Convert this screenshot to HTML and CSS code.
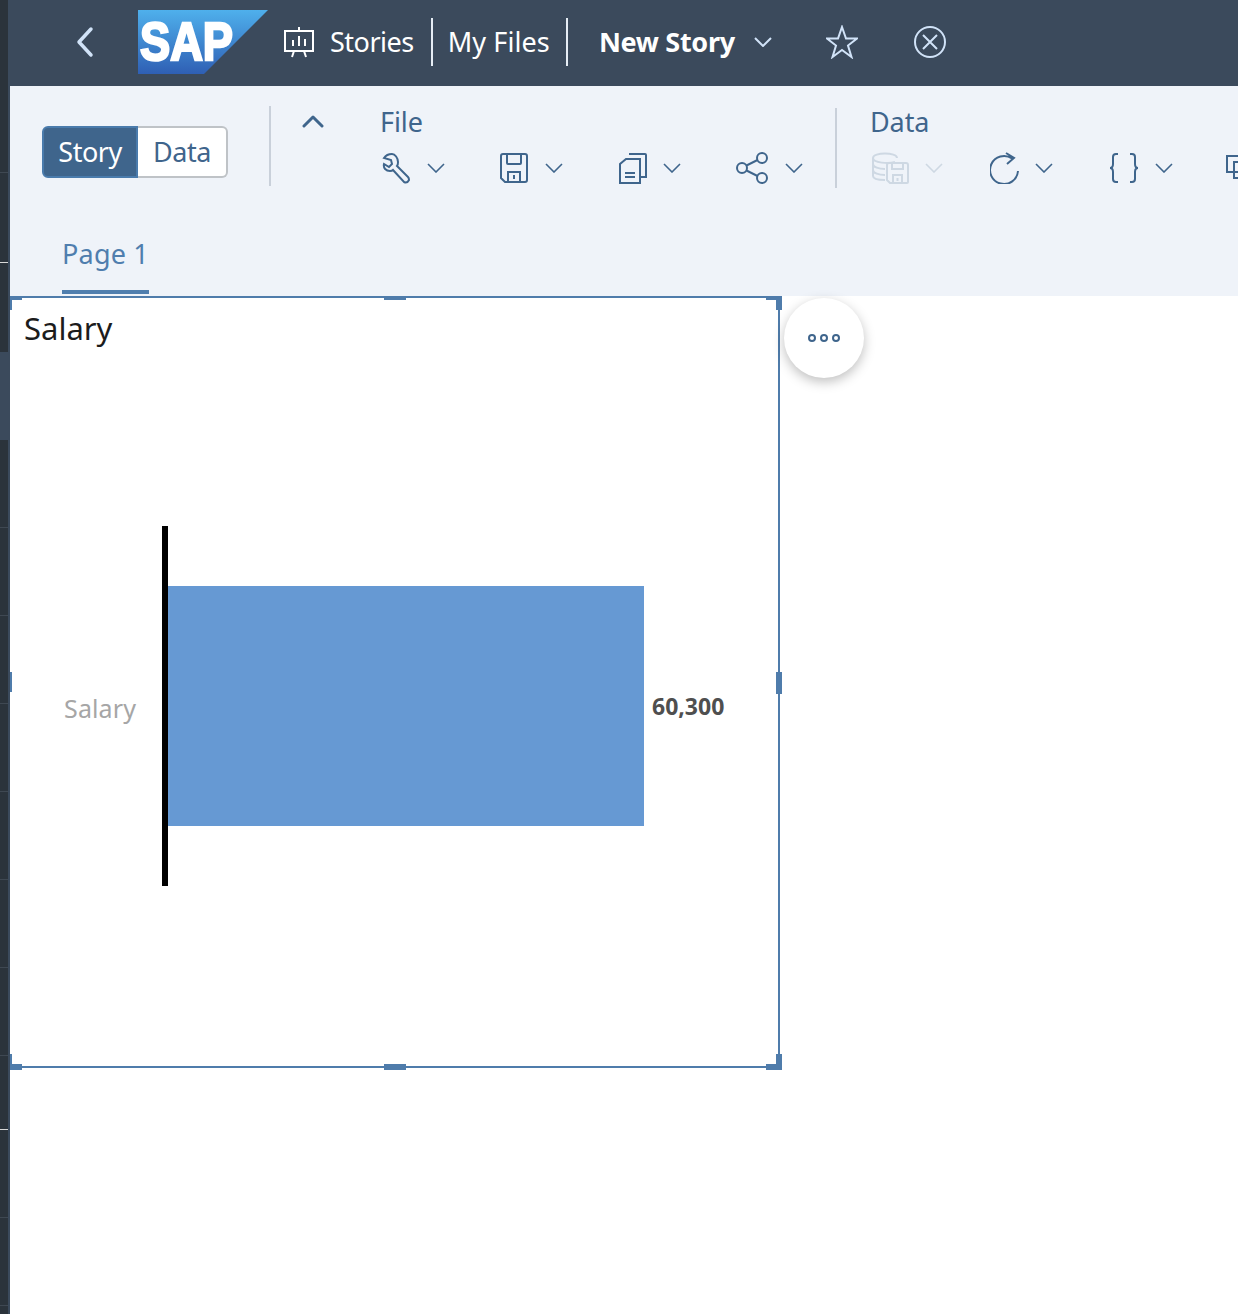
FILE: index.html
```html
<!DOCTYPE html>
<html lang="en">
<head>
  <meta charset="UTF-8" />
  <title>New Story</title>
  <link rel="stylesheet" href="styles.css">
</head>
<body>
  <div class="app">
    <div class="rail">
      <div class="rail-item first"></div>
      <div class="rail-item tall light"></div>
      <div class="rail-item tall plain"></div>
      <div class="rail-item active"></div>
      <div class="rail-item"></div>
      <div class="rail-item"></div>
      <div class="rail-item"></div>
      <div class="rail-item"></div>
      <div class="rail-item"></div>
      <div class="rail-item"></div>
      <div class="rail-item"></div>
      <div class="rail-item short light"></div>
      <div class="rail-item"></div>
      <div class="rail-item"></div>
    </div>

    <div class="main">
      <header class="shell">
        <svg class="back" width="20" height="32" viewBox="0 0 20 32"><path d="M16 3 4 16l12 13" /></svg>
        <svg class="logo" width="130" height="64" viewBox="0 0 130 64">
          <defs>
            <linearGradient id="sapBlue" x1="0" y1="0" x2="0" y2="1">
              <stop offset="0" stop-color="#4fb0ec" />
              <stop offset="1" stop-color="#2f5fb4" />
            </linearGradient>
          </defs>
          <polygon points="0,0 130,0 66,64 0,64" fill="url(#sapBlue)" />
          <text x="2" y="50" class="logo-text" textLength="93" lengthAdjust="spacingAndGlyphs">SAP</text>
        </svg>
        <svg class="stories-icon" width="32" height="34" viewBox="0 0 32 34"><path d="M2 6h28v20H2zM16 2v4M11 26l-2 6M21 26l2 6M10 21v-6M16 21V11M22 21v-7" /></svg>
        <span class="crumb">Stories</span>
        <span class="crumb-sep"></span>
        <span class="crumb files">My Files</span>
        <span class="crumb-sep"></span>
        <span class="story-title">New Story</span>
        <svg class="chev light" width="18" height="10" viewBox="0 0 18 10"><path d="M1 1l8 8 8-8" /></svg>
        <svg class="star" width="32" height="34" viewBox="0 0 32 34"><path d="M16 2l4 11.500h11l-9 7 3.500 11.500-9.500-7-9.500 7L10 20.500l-9-7h11z" /></svg>
        <svg class="close" width="32" height="34" viewBox="0 0 32 34"><circle cx="16" cy="17" r="15" /><path d="M9 10l14 14M23 10L9 24" /></svg>
      </header>

      <section class="ribbon">
        <div class="segmented">
          <span class="seg on">Story</span>
          <span class="seg">Data</span>
        </div>
        <span class="divider first"></span>
        <svg class="collapse" width="22" height="14" viewBox="0 0 22 14"><path d="M2 12 11 3l9 9" /></svg>

        <div class="group file-group">
          <div class="group-name">File</div>
          <div class="tools">
            <div class="tool">
              <svg class="ico" width="30" height="32" viewBox="0 0 30 32"><path d="M10 2c-3 0-6 1-8 4l7 2 1 4-3 3-5-3c-1 4 2 7 6 7 1 0 2 0 3-1l11 12c2 1 4 0 5-2 0-1 0-2-1-3L15 14c1-1 1-3 1-4 0-4-3-8-6-8z" /></svg>
              <svg class="chev" width="18" height="10" viewBox="0 0 18 10"><path d="M1 1l8 8 8-8" /></svg>
            </div>
            <div class="tool">
              <svg class="ico" width="30" height="32" viewBox="0 0 30 32"><path d="M3 2h22a2 2 0 0 1 2 2v24a2 2 0 0 1-2 2H5l-4-4V4a2 2 0 0 1 2-2zM7 2v9a1 1 0 0 0 1 1h12a1 1 0 0 0 1-1V2M8 30V20h12v10M14 23v4" /></svg>
              <svg class="chev" width="18" height="10" viewBox="0 0 18 10"><path d="M1 1l8 8 8-8" /></svg>
            </div>
            <div class="tool">
              <svg class="ico" width="30" height="32" viewBox="0 0 30 32"><path d="M11 2h16a1 1 0 0 1 1 1v22h-5M8 7h14v24H2V12zM7 21h10M7 25h10" /></svg>
              <svg class="chev" width="18" height="10" viewBox="0 0 18 10"><path d="M1 1l8 8 8-8" /></svg>
            </div>
            <div class="tool share">
              <svg class="ico" width="34" height="32" viewBox="0 0 34 32"><circle cx="6" cy="16" r="5" /><circle cx="26" cy="6" r="5" /><circle cx="26" cy="26" r="5" /><path d="M10.500 13.500l11-5.500M10.500 18.500l11 5.500" /></svg>
              <svg class="chev" width="18" height="10" viewBox="0 0 18 10"><path d="M1 1l8 8 8-8" /></svg>
            </div>
          </div>
        </div>

        <span class="divider second"></span>

        <div class="group">
          <div class="group-name">Data</div>
          <div class="tools">
            <div class="tool off">
              <svg class="ico" width="38" height="32" viewBox="0 0 38 32"><path d="M1 6c0-6 24-6 24 0M1 6c0 5 16 6 22 4M1 6v18c0 3 6 4 12 4M1 12c0 3 6 5 12 5M1 18c0 3 6 5 12 5" /><path d="M17 11h17a2 2 0 0 1 2 2v17a1 1 0 0 1-1 1H18l-3-3V13a2 2 0 0 1 2-2zM20 11v6h11v-6M21 31v-8h9v8M25.500 26v3" /></svg>
              <svg class="chev" width="18" height="10" viewBox="0 0 18 10"><path d="M1 1l8 8 8-8" /></svg>
            </div>
            <div class="tool">
              <svg class="ico" width="30" height="32" viewBox="0 0 30 32"><path d="M28 19A14 14 0 1 1 22 6.500M16 1l8 5-7 6" /></svg>
              <svg class="chev" width="18" height="10" viewBox="0 0 18 10"><path d="M1 1l8 8 8-8" /></svg>
            </div>
            <div class="tool">
              <svg class="ico" width="32" height="32" viewBox="0 0 32 32"><path d="M10 2H8C6 2 5 3 5 5v7c0 2-1 4-3 4 2 0 3 2 3 4v7c0 2 1 3 3 3h2M22 2h2c2 0 3 1 3 3v7c0 2 1 4 3 4-2 0-3 2-3 4v7c0 2-1 3-3 3h-2" /></svg>
              <svg class="chev" width="18" height="10" viewBox="0 0 18 10"><path d="M1 1l8 8 8-8" /></svg>
            </div>
            <div class="tool">
              <svg class="ico" width="30" height="32" viewBox="0 0 30 32"><path d="M1 4h20v16H1zM8 10h20v16H8z" /></svg>
            </div>
          </div>
        </div>
      </section>

      <nav class="tabs">
        <span class="tab">Page 1</span>
      </nav>

      <div class="canvas">
        <div class="widget">
          <h2 class="widget-title">Salary</h2>
          <div class="chart">
            <span class="cat-label">Salary</span>
            <div class="axis">
              <div class="bar"></div>
              <span class="value">60,300</span>
            </div>
          </div>

          <span class="handle tl-h"></span><span class="handle tl-v"></span>
          <span class="handle tr-h"></span><span class="handle tr-v"></span>
          <span class="handle bl-h"></span><span class="handle bl-v"></span>
          <span class="handle br-h"></span><span class="handle br-v"></span>
          <span class="handle top-mid"></span><span class="handle bottom-mid"></span>
          <span class="handle left-mid"></span><span class="handle right-mid"></span>

          <button class="more">
            <svg width="34" height="10" viewBox="0 0 34 10"><circle cx="5" cy="5" r="3" /><circle cx="17" cy="5" r="3" /><circle cx="29" cy="5" r="3" /></svg>
          </button>
        </div>
      </div>
    </div>
  </div>
</body>
</html>
```

FILE: styles.css
```css
html, body {
  margin: 0;
  height: 100%;
  overflow: hidden;
  background-color: #fff;
}

body {
  font-family: "Noto Sans", "Open Sans", sans-serif;
}

svg {
  display: block;
  flex: none;
}

.app {
  display: flex;
  height: 1314px;
}

/* left strip */
.rail {
  width: 8px;
  flex: none;
  border-right: 2px solid #3b4a5c;
  background-color: #2b333b;
}

.rail-item {
  height: 87px;
  border-bottom: 1px solid #3f4852;
}

.rail-item.first {
  height: 172px;
}

.rail-item.tall {
  height: 89px;
}

.rail-item.short {
  height: 73px;
}

.rail-item.light {
  border-bottom-color: #d8d8d8;
}

.rail-item.plain {
  border-bottom: 0;
}

.rail-item.active {
  background-color: #3b4a5c;
  border-bottom: 0;
  height: 88px;
}

.main {
  flex: 1;
  min-width: 0;
}

/* top bar */
.shell {
  height: 86px;
  box-sizing: border-box;
  padding-bottom: 2px;
  display: flex;
  align-items: center;
  background-color: #3b4a5c;
  color: #fff;
  font-size: 27px;
}

.back {
  margin-left: 65px;
  fill: none;
  stroke: #d1e3f8;
  stroke-width: 3.500;
  stroke-linecap: round;
  stroke-linejoin: round;
}

.logo {
  margin-left: 43px;
}

.logo-text {
  font-family: "Liberation Sans", sans-serif;
  font-size: 54px;
  font-weight: 700;
  fill: #fff;
  stroke: #fff;
  stroke-width: 2.500;
}

.stories-icon {
  margin-left: 15px;
  fill: none;
  stroke: #fff;
  stroke-width: 2;
}

.crumb {
  margin-left: 15px;
  padding-bottom: 2px;
  letter-spacing: -0.500px;
}

.crumb.files {
  margin-left: 15px;
  letter-spacing: 0.100px;
}

.crumb-sep {
  width: 2px;
  height: 48px;
  margin-left: 17px;
  background-color: #e6edf5;
}

.crumb.files + .crumb-sep {
  margin-left: 16px;
}

.story-title {
  margin-left: 31px;
  padding-bottom: 2px;
  font-weight: 700;
  letter-spacing: -0.300px;
}

.chev {
  fill: none;
  stroke: #3f658c;
  stroke-width: 1.600;
}

.chev.light {
  stroke: #d1e3f8;
  stroke-width: 2;
  margin-left: 19px;
}

.star,
.close {
  fill: none;
  stroke: #d1e3f8;
  stroke-width: 2;
}

.star {
  margin-left: 54px;
}

.close {
  margin-left: 56px;
}

/* ribbon */
.ribbon {
  height: 124px;
  display: flex;
  background-color: #eff3f9;
  overflow: hidden;
}

.segmented {
  display: flex;
  height: 52px;
  margin: 40px 0 0 32px;
  font-size: 27px;
  letter-spacing: -0.500px;
}

.seg {
  display: flex;
  align-items: center;
  justify-content: center;
  box-sizing: border-box;
  width: 90px;
  padding-bottom: 2px;
  color: #3f658c;
  background-color: #fff;
  border: 2px solid #bfc3c7;
  border-left: 0;
  border-radius: 0 6px 6px 0;
}

.seg.on {
  width: 96px;
  color: #fff;
  background-color: #3f658c;
  border: 2px solid #4a7bac;
  border-radius: 6px 0 0 6px;
}

.divider {
  width: 2px;
  height: 80px;
  flex: none;
  background-color: #c9d0da;
}

.divider.first {
  margin: 20px 0 0 41px;
}

.divider.second {
  margin: 22px 0 0 0;
}

.collapse {
  margin: 28px 0 0 31px;
  fill: none;
  stroke: #3f658c;
  stroke-width: 3;
  stroke-linecap: round;
  stroke-linejoin: round;
}

.group {
  flex: none;
  margin-left: 34px;
}

.file-group {
  width: 454px;
  margin-left: 57px;
}

.group-name {
  margin: 17px 0 0 -1px;
  font-size: 27px;
  line-height: 38px;
  color: #3f658c;
  letter-spacing: -0.100px;
}

.tools {
  display: flex;
  margin-top: 11px;
}

.tool {
  width: 118px;
  flex: none;
  display: flex;
  align-items: center;
  gap: 15px;
}

.tool .ico {
  margin-left: 1px;
  fill: none;
  stroke: #3f658c;
  stroke-width: 2;
}

.tool.off .ico {
  stroke: #ced8e3;
}

.tool.off .chev {
  stroke: #ced8e3;
}

/* tabs */
.tabs {
  height: 86px;
  display: flex;
  align-items: flex-end;
  padding: 0 0 2px 52px;
  box-sizing: border-box;
  background-color: #eff3f9;
}

.tab {
  padding-bottom: 16px;
  font-size: 27px;
  line-height: 40px;
  color: #4f7eae;
  letter-spacing: 0.200px;
  border-bottom: 4px solid #4f7eae;
}

/* story canvas */
.widget {
  position: relative;
  box-sizing: border-box;
  width: 770px;
  height: 772px;
  border: 2px solid #4f7cab;
  border-left-color: transparent;
  background-color: #fff;
}

.widget-title {
  margin: 10px 0 0 12px;
  font-size: 31px;
  line-height: 40px;
  font-weight: 400;
  color: #1c1c1c;
}

.chart {
  display: flex;
  align-items: center;
  margin-top: 178px;
}

.cat-label {
  width: 150px;
  padding-right: 26px;
  box-sizing: border-box;
  text-align: right;
  font-size: 25px;
  color: #a6a6a6;
  letter-spacing: 0.100px;
  position: relative;
  top: 2px;
}

.axis {
  display: flex;
  align-items: center;
  height: 360px;
  border-left: 6px solid #000;
}

.bar {
  width: 476px;
  height: 240px;
  background-color: #6699d3;
}

.value {
  margin-left: 8px;
  font-size: 23px;
  font-weight: 700;
  color: #4f4f4f;
}

.handle {
  position: absolute;
  background-color: #4f7cab;
}

.tl-h { left: -2px; top: -2px; width: 12px; height: 4px; }
.tl-v { left: -2px; top: -2px; width: 2px; height: 14px; }
.tr-h { right: -4px; top: -2px; width: 16px; height: 4px; }
.tr-v { right: -4px; top: -2px; width: 6px; height: 14px; }
.bl-h { left: -2px; bottom: -4px; width: 12px; height: 6px; }
.bl-v { left: -2px; bottom: -4px; width: 2px; height: 16px; }
.br-h { right: -4px; bottom: -4px; width: 16px; height: 6px; }
.br-v { right: -4px; bottom: -4px; width: 6px; height: 16px; }
.top-mid { left: 372px; top: -2px; width: 22px; height: 4px; }
.bottom-mid { left: 372px; bottom: -4px; width: 22px; height: 6px; }
.left-mid { left: -2px; top: 374px; width: 2px; height: 20px; }
.right-mid { right: -4px; top: 374px; width: 6px; height: 22px; }

.more {
  position: absolute;
  left: 772px;
  top: 0;
  width: 80px;
  height: 80px;
  display: flex;
  align-items: center;
  justify-content: center;
  padding: 0;
  border: 0;
  border-radius: 50%;
  background-color: #fff;
  box-shadow: 0 4px 12px rgba(0, 0, 0, 0.25);
}

.more svg {
  fill: none;
  stroke: #3f658c;
  stroke-width: 2;
}
```
